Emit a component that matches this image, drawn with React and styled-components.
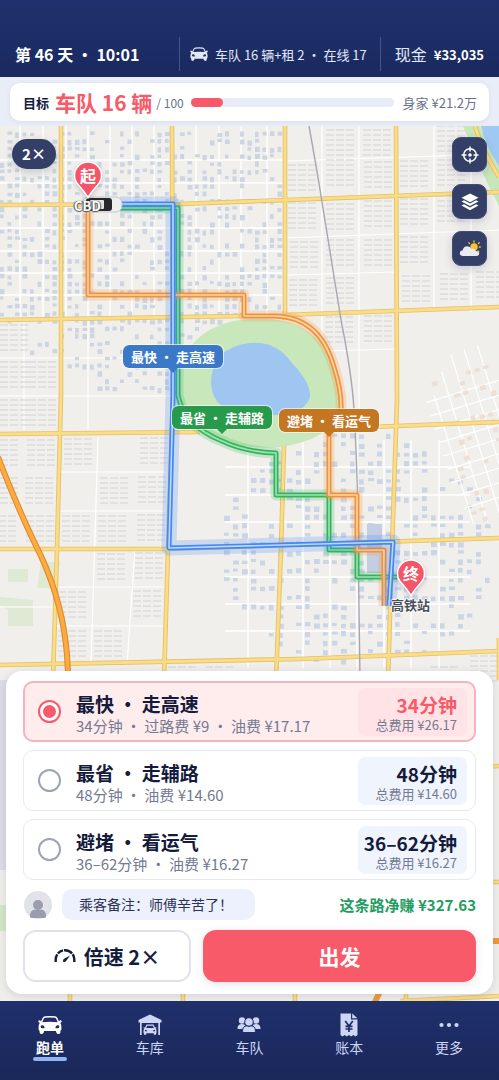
import React, { useState } from "react";
import styled, { createGlobalStyle } from "styled-components";

const GlobalStyle = createGlobalStyle`
  * {
    box-sizing: border-box;
  }
  body {
    margin: 0;
    background: #e9edf7;
    color: #141b3c;
    font-family: "Noto Sans CJK SC", sans-serif;
  }
  button, input {
    font-family: inherit;
    color: inherit;
  }
`;

const Page = styled.div`
  display: flex;
  flex-direction: column;
  min-height: 100vh;
`;

const Header = styled.header`
  display: grid;
  grid-template-columns: 1fr auto auto;
  align-items: center;
  padding: 37px 15px 6px;
  color: #ffffff;
  background: linear-gradient(#20306c, #1a2a60);
`;

const Clock = styled.strong`
  font-size: 16px;
  line-height: 34px;
  white-space: nowrap;
`;

const HeaderCell = styled.div`
  display: flex;
  align-items: center;
  gap: 7px;
  height: 34px;
  padding: 0 0 0 ${(props) => props.$left}px;
  margin-left: 13px;
  border-left: 1px solid #46548a;
  font-size: ${(props) => props.$size}px;
  color: #e3e8f8;
  white-space: nowrap;

  strong {
    font-size: 13px;
    color: #ffffff;
  }
`;

const GoalBar = styled.section`
  padding: 6px 10px 5px;
  background: #e9edf7;
`;

const GoalCard = styled.div`
  display: flex;
  align-items: center;
  height: 38px;
  padding: 0 12px 0 13px;
  border-radius: 10px;
  background: #ffffff;
  font-size: 13px;
  white-space: nowrap;
  box-shadow: 0 1px 5px rgba(40, 55, 110, 0.08);
`;

const GoalValue = styled.strong`
  margin: 0 4px 0 6px;
  font-size: 21px;
  line-height: 24px;
  color: #f95a69;
`;

const GoalTotal = styled.span`
  font-size: 12px;
  color: #68708b;
`;

const GoalProgress = styled.progress`
  appearance: none;
  flex: 1;
  min-width: 0;
  height: 9px;
  margin: 0 9px 0 7px;
  border: none;

  &::-webkit-progress-bar {
    border-radius: 5px;
    background: #e9ecf7;
  }
  &::-webkit-progress-value {
    border-radius: 5px;
    background: #f95a69;
  }
`;

const Worth = styled.span`
  color: #68708b;
`;

const MapArea = styled.main`
  position: relative;
  flex: 1;
  display: flex;
  flex-direction: column;
  justify-content: space-between;
  overflow: hidden;
  background: #f0efeb;
`;

const MapCanvas = styled.svg`
  position: absolute;
  inset: 0;
  width: 100%;
  height: 100%;
`;

const Controls = styled.div`
  position: relative;
  display: flex;
  align-items: flex-start;
  justify-content: space-between;
  min-height: 544px;
  padding: 11px 12px 0;
`;

const SpeedPill = styled.button`
  width: 44px;
  height: 30px;
  margin-top: 2px;
  padding: 0;
  border: none;
  border-radius: 15px;
  background: #343f67;
  color: #ffffff;
  font-size: 15px;
  font-weight: 700;
  line-height: 30px;
  box-shadow: 0 3px 8px rgba(30, 40, 90, 0.2);
`;

const Tools = styled.div`
  display: flex;
  flex-direction: column;
  gap: 12px;
`;

const ToolButton = styled.button`
  display: grid;
  place-items: center;
  width: 35px;
  height: 35px;
  padding: 0;
  border: 1px solid #414d78;
  border-radius: 9px;
  background: #333f67;
  color: #ffffff;
  box-shadow: 0 3px 8px rgba(60, 50, 110, 0.2);
`;

const RouteTag = styled.div`
  position: absolute;
  left: ${(props) => props.$x}px;
  top: ${(props) => props.$y}px;
  padding: 0 8px;
  border: 1px solid rgba(255, 255, 255, 0.6);
  border-radius: 7px;
  background: ${(props) => props.$color};
  background-clip: padding-box;
  color: #ffffff;
  font-size: 13px;
  font-weight: 700;
  line-height: 23px;
  white-space: nowrap;

  &::after {
    content: "";
    position: absolute;
    top: 100%;
    left: 50%;
    margin-left: -5px;
    border: 5px solid transparent;
    border-top-color: ${(props) => props.$color};
    border-bottom: none;
  }
`;

const Pin = styled.div`
  position: absolute;
  left: ${(props) => props.$x}px;
  top: ${(props) => props.$y}px;
  width: 30px;
  height: 38px;
  color: #ffffff;
  font-size: 16px;
  font-weight: 700;
  line-height: 28px;
  text-align: center;

  svg {
    position: absolute;
    inset: 0;
    filter: drop-shadow(0 2px 2px rgba(60, 50, 110, 0.25));
  }
  span {
    position: relative;
  }
`;

const PlaceName = styled.div`
  position: absolute;
  left: ${(props) => props.$x}px;
  top: ${(props) => props.$y}px;
  font-size: 13px;
  font-weight: 700;
  line-height: 18px;
  color: ${(props) => (props.$light ? "#ffffff" : "#4c505a")};
  text-shadow: ${(props) =>
    props.$light
      ? "1px 0 1px #555, -1px 0 1px #555, 0 1px 1px #555"
      : "1px 0 1px #fff, -1px 0 1px #fff, 0 1px 1px #fff, 0 -1px 1px #fff"};
`;

const Sheet = styled.form`
  position: relative;
  display: flex;
  flex-direction: column;
  margin: 0 6px 7px;
  padding: 10px 17px 12px;
  border-radius: 16px;
  background: #ffffff;
  box-shadow: 0 2px 10px rgba(40, 50, 100, 0.15);
`;

const RouteList = styled.div`
  display: flex;
  flex-direction: column;
  gap: 8px;
`;

const RouteRow = styled.label`
  display: flex;
  align-items: center;
  height: 61px;
  padding: ${(props) => (props.$active ? "0 7px 0 13px" : "0 8px 0 14px")};
  border: ${(props) => (props.$active ? "2px solid #f6b3bf" : "1px solid #e6e9f2")};
  border-radius: 10px;
  background: ${(props) => (props.$active ? "#ffeced" : "#ffffff")};
  cursor: pointer;
`;

const Radio = styled.input`
  appearance: none;
  flex: none;
  display: grid;
  place-items: center;
  width: 23px;
  height: 23px;
  margin: 0 15px 0 0;
  border: 2px solid #9ea4b4;
  border-radius: 50%;
  background: #ffffff;

  &:checked {
    border-color: #f95a69;
  }
  &:checked::after {
    content: "";
    width: 13px;
    height: 13px;
    border-radius: 50%;
    background: #f95a69;
  }
`;

const RouteText = styled.div`
  flex: 1;
  min-width: 0;
  padding-top: 4px;
`;

const RouteName = styled.div`
  font-size: 19px;
  font-weight: 700;
  line-height: 24px;
`;

const RouteDetail = styled.div`
  font-size: 15px;
  line-height: 20px;
  color: #737a92;
  white-space: nowrap;
`;

const CostBox = styled.div`
  width: 109px;
  padding: 5px 10px 3px 0;
  border-radius: 7px;
  background: ${(props) => (props.$active ? "#ffe3e6" : "#f0f4fd")};
  text-align: right;
  white-space: nowrap;
`;

const CostTime = styled.div`
  font-size: 19px;
  font-weight: 700;
  line-height: 23px;
  color: ${(props) => (props.$active ? "#f95a69" : "#141b3c")};
`;

const CostTotal = styled.div`
  font-size: 13px;
  line-height: 17px;
  color: #737a92;
`;

const NoteRow = styled.div`
  display: flex;
  align-items: center;
  margin: 9px 0 10px;
  padding-left: 1px;
`;

const Note = styled.p`
  margin: 0 auto 0 10px;
  padding: 0 22px 0 17px;
  border-radius: 10px;
  background: #edf1fd;
  font-size: 14px;
  line-height: 31px;
  color: #2c3353;
`;

const NetIncome = styled.strong`
  font-size: 15px;
  line-height: 24px;
  color: #249b5f;
  white-space: nowrap;
`;

const Actions = styled.div`
  display: grid;
  grid-template-columns: 8fr 13fr;
  gap: 12px;
`;

const ActionButton = styled.button`
  display: flex;
  align-items: center;
  justify-content: center;
  gap: 8px;
  height: 52px;
  padding: 0;
  border: ${(props) => (props.$primary ? "none" : "2px solid #dfe1ec")};
  border-radius: 13px;
  background: ${(props) => (props.$primary ? "#f85a69" : "#ffffff")};
  color: ${(props) => (props.$primary ? "#ffffff" : "#141b3c")};
  box-shadow: ${(props) => (props.$primary ? "0 2px 8px rgba(60, 60, 100, 0.15)" : "none")};
  font-size: ${(props) => (props.$primary ? 21 : 20)}px;
  font-weight: 700;
`;

const TabBar = styled.nav`
  display: grid;
  grid-template-columns: repeat(5, 1fr);
  height: 79px;
  padding-top: 12px;
  background: linear-gradient(#20306c, #1a2759);
`;

const Tab = styled.a`
  display: flex;
  flex-direction: column;
  align-items: center;
  color: ${(props) => (props.$active ? "#ffffff" : "#cdd6f3")};
  font-size: 14px;
  font-weight: ${(props) => (props.$active ? 700 : 400)};
  line-height: 20px;
  text-decoration: none;

  svg {
    height: 24px;
  }
  &::after {
    content: "";
    width: 34px;
    height: 4px;
    border-radius: 2px;
    background: ${(props) => (props.$active ? "#8fb5f8" : "transparent")};
  }
`;

const CarIcon = ({ width = 24 }) => (
  <svg width={width} viewBox="0 0 24 19" fill="currentColor" aria-hidden="true">
    <path
      fillRule="evenodd"
      d="M7 .8Q12 0 17 .8Q18.7 1 19.4 2.5L21 6Q21.4 4.8 22.8 4.8Q24 5.3 23.6 6.5L22.2 7.6Q23.4 9 23.4 11V14Q23.2 15 22.4 15.3V17Q22 18.5 20.5 18.5Q18.8 18.5 18.3 17L18 15.5H6L5.7 17Q5.2 18.5 3.5 18.5Q2 18.5 1.6 17V15.3Q.8 15 .6 14V11Q.6 9 1.8 7.6L.4 6.5Q0 5.3 1.2 4.8Q2.6 4.8 3 6L4.6 2.5Q5.3 1 7 .8ZM7.2 2.3Q6.2 2.4 5.8 3.3L4.3 6.8Q12 5.8 19.7 6.8L18.2 3.3Q17.8 2.4 16.8 2.3Q12 1.7 7.2 2.3ZM4.5 9.8Q2.6 9.6 2.6 11.2Q2.7 12.7 4.6 12.7H6.5Q6.8 10.3 4.5 9.8ZM19.5 9.8Q17.2 10.3 17.5 12.7H19.4Q21.3 12.7 21.4 11.2Q21.4 9.6 19.5 9.8Z"
    />
  </svg>
);

const GarageIcon = () => (
  <svg width="24" viewBox="0 0 24 21" fill="currentColor" aria-hidden="true">
    <path d="M12 0L23.5 5.5V8H22V20.5H20.3V8.5H3.7V20.5H2V8H.5V5.5Z" />
    <path
      fillRule="evenodd"
      d="M8.5 10H15.5L17 13.2L18.2 12.6L18.5 13.5L17.7 14.2Q18.5 15 18.5 16V18.8H18V20.2H15.8V18.8H8.2V20.2H6V18.8H5.5V16Q5.5 15 6.3 14.2L5.5 13.5L5.8 12.6L7 13.2ZM9.2 11.2L8.2 13.6H15.8L14.8 11.2ZM7 15.3V16.7H9.2L8.7 15.7ZM17 15.3L15.3 15.7L14.8 16.7H17Z"
    />
  </svg>
);

const FleetIcon = () => (
  <svg width="24" viewBox="0 0 24 20" fill="currentColor" stroke="#1e2d67" aria-hidden="true">
    <circle cx="5" cy="5.5" r="3.2" strokeWidth="0" />
    <circle cx="19" cy="5.5" r="3.2" strokeWidth="0" />
    <path strokeWidth="0" d="M.5 13.5Q.5 9 5 9Q8 9 8.5 11V14H.5ZM23.5 13.5Q23.5 9 19 9Q16 9 15.5 11V14H23.5Z" />
    <circle cx="12" cy="7" r="4.3" />
    <path d="M5.5 16.5Q5.5 10.8 10 10.8Q12 12.3 14 10.8Q18.5 10.8 18.5 16.5Q18.3 17.5 17 17.5H7Q5.7 17.5 5.5 16.5Z" />
  </svg>
);

const LedgerIcon = () => (
  <svg width="18" viewBox="0 0 18 24" fill="currentColor" aria-hidden="true">
    <path d="M.5 .5H11V6.5H17.5V22L15.5 23.5L13.4 22L11.2 23.5L9 22L6.8 23.5L4.6 22L2.5 23.5L.5 22Z" />
    <path d="M12.2 .5L17.5 5.3H12.2Z" />
    <path d="M5.2 8L9 13L12.8 8M9 13V19M5.5 13.3H12.5M5.5 16H12.5" fill="none" stroke="#1e2d67" strokeWidth="1.7" />
  </svg>
);

const MoreIcon = () => (
  <svg width="24" viewBox="0 0 24 24" fill="currentColor" aria-hidden="true">
    <circle cx="4.5" cy="12" r="2.1" />
    <circle cx="12" cy="12" r="2.1" />
    <circle cx="19.5" cy="12" r="2.1" />
  </svg>
);

const LocateIcon = () => (
  <svg width="18" height="18" viewBox="0 0 18 18" fill="none" stroke="currentColor" strokeWidth="1.5" aria-hidden="true">
    <circle cx="9" cy="9" r="6.3" />
    <circle cx="9" cy="9" r="1.8" fill="currentColor" stroke="none" />
    <path d="M9 .5V5.5M9 12.5V17.5M.5 9H5.5M12.5 9H17.5" />
  </svg>
);

const LayersIcon = () => (
  <svg width="18" height="18" viewBox="0 0 18 18" fill="currentColor" aria-hidden="true">
    <path d="M9 .5L17.5 4.8L9 9.3L.5 4.8Z" />
    <path d="M.5 8.5L3 7.3L9 10.4L15 7.3L17.5 8.5L9 13Z" />
    <path d="M.5 12.5L3 11.3L9 14.4L15 11.3L17.5 12.5L9 17.2Z" />
  </svg>
);

const WeatherIcon = () => (
  <svg width="22" height="18" viewBox="0 0 22 18" aria-hidden="true">
    <g stroke="#f6c52f" strokeWidth="1.3" strokeLinecap="round">
      <circle cx="15" cy="7" r="3.7" fill="#f6c52f" stroke="none" />
      <path d="M15 2V1M10.5 3.5L9.8 2.7M19.5 3.5L20.2 2.7M20.3 7H21.3M19 11L19.8 11.8" />
    </g>
    <path
      d="M4 16Q.8 16 .8 13Q1 10.5 3.7 10.3Q4.5 6.2 8.3 6.2Q11.3 6.2 12.5 9Q16.2 8.3 16.8 11Q20 11 20.2 13.5Q20.2 16 17.2 16Z"
      fill="#e9ebf2"
    />
  </svg>
);

const GaugeIcon = () => (
  <svg width="22" height="16" viewBox="0 0 22 16" fill="none" stroke="currentColor" aria-hidden="true">
    <path d="M1.7 14V11.5A9.3 9.3 0 0 1 20.3 11.5V14" strokeWidth="2.4" strokeDasharray="8 1 6 1 9 1" />
    <path d="M9 13.5Q8.5 11.5 10.5 10.5L16 7.5L12.5 12.5Q10.5 15 9 13.5Z" fill="currentColor" stroke="none" />
  </svg>
);

const AvatarIcon = () => (
  <svg width="28" height="28" viewBox="0 0 28 28" aria-hidden="true">
    <circle cx="14" cy="14" r="14" fill="#e2e3e9" />
    <circle cx="14" cy="14" r="5" fill="#9a9dac" />
    <path d="M6 26Q5.5 18.5 11.5 18.5H16.5Q22.5 18.5 22 26Q21.5 27 20 27H8Q6.5 27 6 26Z" fill="#9a9dac" />
  </svg>
);

const PinShape = () => (
  <svg width="30" height="38" viewBox="0 0 30 38" aria-hidden="true">
    <path
      d="M15 36.5Q11 30 5 23.5Q1.5 19.5 1.5 14.5A13.5 13.5 0 0 1 28.5 14.5Q28.5 19.5 25 23.5Q19 30 15 36.5Z"
      fill="#f65467"
      stroke="#ffffff"
      strokeWidth="1.5"
    />
  </svg>
);

/* cheap repeatable noise so the city looks the same on each render */
const noise = (a, b) => {
  const n = Math.sin(a * 127.1 + b * 311.7) * 43758.5453;
  return n - Math.floor(n);
};

const inPark = (x, y) => ((x - 260) / 90) ** 2 + ((y - 384) / 73) ** 2 < 1;

const houses = (left, top, right, bottom, step, inside) => {
  let d = "";
  for (let x = left; x < right; x += step) {
    for (let y = top; y < bottom; y += step) {
      if (!inside(x, y) || inPark(x, y) || noise(x, y) < 0.48) continue;
      const w = 3.5 + noise(y, x) * 1.5 + (step > 8 ? 1 : 0);
      const h = 3 + noise(x + 3, y) * 2.5;
      const dy = noise(x, y + 5) * 2 - 1;
      d += `M${x} ${(y + dy).toFixed(1)}h${w.toFixed(1)}v${h.toFixed(1)}h-${w.toFixed(1)}z`;
    }
  }
  return d;
};

const terraces = (blocks) => {
  let d = "";
  blocks.forEach(([x, y]) => {
    for (let row = 0; row < 6; row++) {
      for (let col = 0; col < 3; col++) {
        d += `M${x + col * 10} ${y + row * 5}h8`;
      }
    }
  });
  return d;
};

const oldTown = houses(0, 132, 284, 392, 7.5, (x, y) => {
  if (y > 324 && x < 28) return false;
  if (y > 350 && x < 62) return false;
  return y < 372 || x > 90;
});
const stationTown = houses(224, 434, 492, 664, 9, (x, y) => {
  const dx = (x - 355) / 138;
  const dy = (y - 548) / 118;
  return dx * dx + dy * dy < 1;
});
const village = houses(450, 372, 510, 520, 9, (x, y) => noise(x + 1, y) > 0.5);

const TERRACES = [
  [326, 130], [363, 130], [437, 126], [288, 165], [326, 160], [364, 162], [400, 161], [437, 160],
  [288, 203], [326, 204], [364, 201], [400, 199], [437, 196], [290, 242], [326, 240], [364, 240],
  [400, 237], [289, 280], [326, 278], [402, 276], [440, 274], [476, 272], [325, 317], [364, 316],
  [0, 325], [0, 362], [28, 362], [0, 400], [28, 400], [-10, 440], [27, 440], [64, 439], [140, 438],
  [-10, 478], [25, 478], [100, 478], [138, 477], [-12, 516], [26, 516], [62, 516], [98, 516],
  [137, 515], [97, 554], [135, 553], [58, 592], [133, 591], [58, 631], [94, 631], [470, 656],
  [168, 667], [205, 667], [430, 667],
];

const ROADS = [
  "M0 205L180 204L499 192",
  "M0 320L244 316",
  "M285 315L499 307",
  "M0 434L200 432",
  "M370 427L499 422",
  "M0 549H168L499 538",
  "M0 665L300 659L499 651",
  "M480 767L499 766",
  "M480 882H499",
  "M61 126V395L57 549L53 680",
  "M172 126L173 395L168 549L164 680",
  "M285 126V320",
  "M284 446L281 549L276 680",
  "M396 126L397 400L392 549L388 680",
  "M70 900V1001M183 900V1001M295 900V1001M407 900L406 1001",
  "M475 126Q482 150 499 177",
  "M499 638V680",
  "M400 1001L499 996",
];

const HIGHWAY = "M-2 457Q20 514 41 556Q63 604 67 655L69 690";
const GREEN = "M120 208H178V395Q183 425 222 441Q245 452 276 453V495H329V550H357V577H397";
const ORANGE = "M88 207V295H244V316H275Q320 317 334 367Q342 392 341 410L329 432V495H357V550H384V606";
const BLUE = "M120 204H173V395L169 548L393 542L389 606";

const Route = ({ d, color, light, halo }) => (
  <g fill="none" strokeLinejoin="round">
    <path d={d} stroke={color} strokeOpacity="0.22" strokeWidth={halo} />
    <path d={d} stroke={color} strokeWidth="5" />
    <path d={d} stroke={light} strokeWidth="1.6" />
  </g>
);

const streetLines = (xs, ys, x1, x2, y1, y2) =>
  xs.map((x) => `M${x} ${y1}V${y2}`).join("") + ys.map((y) => `M${x1} ${y}H${x2}`).join("");

const CityMap = () => (
  <MapCanvas viewBox="0 126 499 875" preserveAspectRatio="xMidYMin slice" aria-hidden="true">
    <rect y="126" width="499" height="875" fill="#f0efeb" />
    <path d="M8 569H28V582H8ZM0 597L33 600V626H8V610L0 606ZM41 562L60 562L55 588H37Z" fill="#deead3" />
    <path d={streetLines([20, 43, 66, 88, 110, 132, 154, 196, 219, 241, 267], [160, 183, 228, 251, 273, 295], 0, 285, 126, 318)} stroke="#ffffff" strokeWidth="1.3" />
    <path d={streetLines([24, 88], [358, 396], 0, 172, 320, 430)} stroke="#ffffff" strokeWidth="1.1" />
    <path d="M98 437L91 665M135 549L127 665M60 472H166M57 511H166M57 587H165M55 626H164M0 607H54" fill="none" stroke="#ffffff" strokeWidth="1.2" />
    <path d="M322 126V430M359 126V430M434 126V312M471 126V312M285 161L499 154M285 238L499 230M285 275L396 272M325 351L396 349" fill="none" stroke="#ffffff" strokeWidth="1.2" />
    <path d={streetLines([248, 303, 330, 357, 384, 411, 439], [467, 495, 522, 577, 604, 631], 225, 470, 440, 668)} stroke="#ffffff" strokeWidth="1.3" />
    <path d={terraces(TERRACES)} stroke="#dddde0" strokeWidth="1.3" />
    <path d={oldTown} fill="#cdd5e2" />
    <path d={stationTown} fill="#cbd5e5" />
    <path d="M367 524H382V573H367Z" fill="#c3cee2" />
    <g transform="rotate(-17 475 440)">
      <path d="M449 385V520M463 365V522M477 352V525M491 350V525M505 350V530M440 390H520M440 404H520M440 418H520M440 432H520M440 446H520M440 460H520M440 474H520M440 488H520M445 502H520" stroke="#ffffff" strokeWidth="1.2" />
      <path d={village} fill="#ecdfd5" />
    </g>
    <path d="M463 126H480L499 165V206Q485 180 474 153Z" fill="#c7e6b9" />
    <path d="M481 126H499V166Q486 147 481 126Z" fill="#9fc8f2" />
    <path d="M178 384Q182 327 246 319Q308 314 329 356Q343 389 341 410Q330 440 280 447Q218 451 190 423Q178 409 178 384Z" fill="#c8e7bb" />
    <path d="M211 383Q211 348 249 343Q276 340 292 363Q311 383 310 397Q305 411 288 414Q260 418 229 410Q212 403 211 383Z" fill="#9fc6f0" />
    <g fill="none">
      {ROADS.map((d) => (
        <path key={d} d={d} stroke="#e3c069" strokeWidth="4.6" />
      ))}
      {ROADS.map((d) => (
        <path key={d} d={d} stroke="#fadd86" strokeWidth="2.8" />
      ))}
      <path d="M309 126Q317 170 322 202L341 320Q352 375 354 410Q358 480 358 540L360 680" stroke="#a8a6b2" strokeWidth="1.4" />
      <path d={HIGHWAY} stroke="#dc8626" strokeWidth="6" />
      <path d={HIGHWAY} stroke="#fcaa42" strokeWidth="4" />
      <path d="M383 985L373 1006" stroke="#f09a3a" strokeWidth="6" />
      <path d="M490 941H499" stroke="#f09a3a" strokeWidth="6" />
    </g>
    <Route d={GREEN} color="#33b45c" light="#9fe3b2" halo={11} />
    <Route d={ORANGE} color="#f3913b" light="#ffd5a6" halo={11} />
    <Route d={BLUE} color="#4488f5" light="#bcd9ff" halo={15} />
    <path d="M0 680H8V870H0Z" fill="#dddce7" />
    <path d="M0 905H8V931H0Z" fill="#d3e8c5" />
    {/* taxi heading east */}
    <g>
      <rect x="82" y="197" width="40" height="15" rx="6" fill="#eceef0" stroke="#b7bac1" strokeWidth="0.8" />
      <rect x="86" y="198" width="26" height="13" rx="3" fill="#26282c" />
      <rect x="90" y="200" width="14" height="9" rx="1" fill="#e3e5e8" />
    </g>
  </MapCanvas>
);

const routes = [
  { id: "fast", name: "最快 · 走高速", detail: "34分钟 · 过路费 ¥9 · 油费 ¥17.17", time: "34分钟", cost: "¥26.17" },
  { id: "cheap", name: "最省 · 走辅路", detail: "48分钟 · 油费 ¥14.60", time: "48分钟", cost: "¥14.60" },
  { id: "calm", name: "避堵 · 看运气", detail: "36–62分钟 · 油费 ¥16.27", time: "36–62分钟", cost: "¥16.27" },
];

const tabs = [
  { label: "跑单", icon: <CarIcon />, active: true },
  { label: "车库", icon: <GarageIcon /> },
  { label: "车队", icon: <FleetIcon /> },
  { label: "账本", icon: <LedgerIcon /> },
  { label: "更多", icon: <MoreIcon /> },
];

const App = () => {
  const [selected, setSelected] = useState("fast");

  return (
    <Page>
      <GlobalStyle />
      <Header>
        <Clock>第 46 天 · 10:01</Clock>
        <HeaderCell $left={10} $size={13}>
          <CarIcon width={18} />
          车队 16 辆+租 2 · 在线 17
        </HeaderCell>
        <HeaderCell $left={14} $size={16}>
          现金 <strong>¥33,035</strong>
        </HeaderCell>
      </Header>

      <GoalBar>
        <GoalCard>
          <strong>目标</strong>
          <GoalValue>车队 16 辆</GoalValue>
          <GoalTotal>/ 100</GoalTotal>
          <GoalProgress value="16" max="100" aria-label="目标" />
          <Worth>身家 ¥21.2万</Worth>
        </GoalCard>
      </GoalBar>

      <MapArea>
        <CityMap />
        <PlaceName $x={74} $y={71} $light>CBD</PlaceName>
        <PlaceName $x={391} $y={470}>高铁站</PlaceName>
        <Pin $x={73} $y={35}>
          <PinShape />
          <span>起</span>
        </Pin>
        <Pin $x={396} $y={433}>
          <PinShape />
          <span>终</span>
        </Pin>
        <RouteTag $x={122} $y={218} $color="#3c78c8">最快 · 走高速</RouteTag>
        <RouteTag $x={171} $y={279} $color="#279b4b">最省 · 走辅路</RouteTag>
        <RouteTag $x={278} $y={282} $color="#c57622">避堵 · 看运气</RouteTag>

        <Controls>
          <SpeedPill type="button">2×</SpeedPill>
          <Tools>
            <ToolButton type="button" aria-label="定位"><LocateIcon /></ToolButton>
            <ToolButton type="button" aria-label="图层"><LayersIcon /></ToolButton>
            <ToolButton type="button" aria-label="天气"><WeatherIcon /></ToolButton>
          </Tools>
        </Controls>

        <Sheet onSubmit={(e) => e.preventDefault()}>
          <RouteList>
            {routes.map((route) => {
              const active = route.id === selected;
              return (
                <RouteRow key={route.id} $active={active}>
                  <Radio type="radio" name="route" checked={active} onChange={() => setSelected(route.id)} />
                  <RouteText>
                    <RouteName>{route.name}</RouteName>
                    <RouteDetail>{route.detail}</RouteDetail>
                  </RouteText>
                  <CostBox $active={active}>
                    <CostTime $active={active}>{route.time}</CostTime>
                    <CostTotal>总费用 {route.cost}</CostTotal>
                  </CostBox>
                </RouteRow>
              );
            })}
          </RouteList>
          <NoteRow>
            <AvatarIcon />
            <Note>乘客备注：师傅辛苦了！</Note>
            <NetIncome>这条路净赚 ¥327.63</NetIncome>
          </NoteRow>
          <Actions>
            <ActionButton type="button">
              <GaugeIcon />
              倍速 2×
            </ActionButton>
            <ActionButton type="submit" $primary>出发</ActionButton>
          </Actions>
        </Sheet>
      </MapArea>

      <TabBar>
        {tabs.map((tab) => (
          <Tab key={tab.label} href="#" $active={tab.active}>
            {tab.icon}
            {tab.label}
          </Tab>
        ))}
      </TabBar>
    </Page>
  );
};

export default App;
